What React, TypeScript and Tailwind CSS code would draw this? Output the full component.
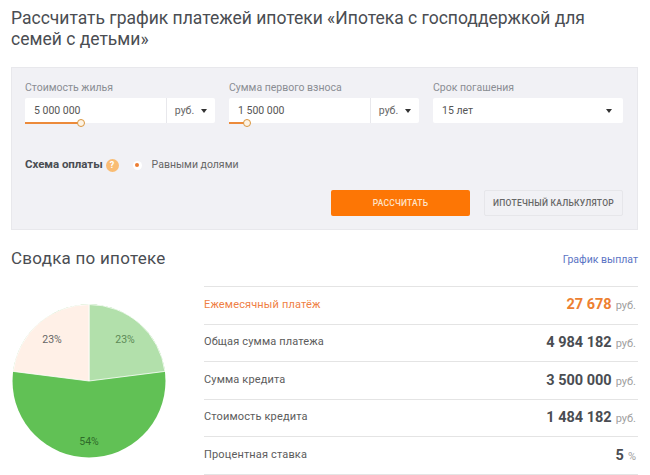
const font = { fontFamily: 'Roboto, "Noto Sans", sans-serif' };

function Caret() {
  return <span className="inline-block w-0 h-0 border-x-[3.5px] border-x-transparent border-t-[4px] border-t-[#333]" />;
}

function MoneyField({ label, value, knob }: { label: string; value: string; knob: number }) {
  return (
    <div className="w-[190px]">
      <div className="h-[18px] text-[10.5px] leading-[15px] text-[#8a8d93]">{label}</div>
      <div className="relative flex h-[25px] bg-white rounded-[2px]">
        <div className="w-[142px] pl-[9px] text-[10.5px] leading-[25px] text-[#555] border-r border-[#e8e8ec]">{value}</div>
        <div className="flex-1 flex items-center justify-center gap-[7px] text-[10.5px] text-[#666]">
          руб. <Caret />
        </div>
        {/* slider */}
        <div className="absolute left-0 bottom-[-1px] h-[2px] bg-[#ec8a3a]" style={{ width: knob }} />
        <div
          className="absolute bottom-[-4px] w-[8px] h-[8px] rounded-full bg-[#fdf3e4] border border-[#d9963f]"
          style={{ left: knob - 4 }}
        />
      </div>
    </div>
  );
}

function Row({ label, value, unit, accent }: { label: string; value: string; unit: string; accent?: boolean }) {
  return (
    <div className="flex items-center justify-between h-[37.6px] border-t border-[#e4e4e4] pr-[2px]">
      <span className={`text-[11px] tracking-[0.15px] -mt-[1px] ${accent ? 'text-[#ef7f45]' : 'text-[#5c5c5c]'}`}>{label}</span>
      <span className="flex items-baseline gap-[4px]">
        <span className={`text-[14.5px] font-bold ${accent ? 'text-[#ed8031]' : 'text-[#4a4d52]'}`}>{value}</span>
        <span className="text-[11px] text-[#a0a0a0]">{unit}</span>
      </span>
    </div>
  );
}

function Pie() {
  return (
    <svg width="154" height="154" viewBox="0 0 154 154" className="block">
      <circle cx="77" cy="77" r="76.5" fill="#61c155" />
      <path d="M77 77 L77 0.5 A76.5 76.5 0 0 1 152.9 67.4 Z" fill="#b2e0ab" stroke="#ffffff" strokeWidth="0.8" />
      <path d="M77 77 L1.1 67.4 A76.5 76.5 0 0 1 77 0.5 Z" fill="#fff0e7" stroke="#ffffff" strokeWidth="0.8" />
      <text x="40" y="39" textAnchor="middle" fontSize="10.5" fill="#666">23%</text>
      <text x="113" y="39" textAnchor="middle" fontSize="10.5" fill="#5c8a56">23%</text>
      <text x="77" y="141" textAnchor="middle" fontSize="10.5" fill="#2f6b2a">54%</text>
    </svg>
  );
}

export default function App() {
  return (
    <div className="w-[650px] h-[475px] overflow-hidden bg-white pl-[11px] pr-[12px] pt-[8px]" style={font}>
      <h1 className="h-[59px] text-[17.5px] leading-[21px] text-[#4a4d52] font-normal">
        Рассчитать график платежей ипотеки «Ипотека с господдержкой для семей с детьми»
      </h1>

      {/* Form panel */}
      <div className="h-[163px] bg-[#f1f1f5] border border-[#e8e8ec] pl-[13px] pr-[14px] pt-[12px]">
        <div className="flex justify-between">
          <MoneyField label="Стоимость жилья" value="5 000 000" knob={56} />
          <MoneyField label="Сумма первого взноса" value="1 500 000" knob={18} />
          <div className="w-[190px]">
            <div className="h-[18px] text-[10.5px] leading-[15px] text-[#8a8d93]">Срок погашения</div>
            <div className="flex items-center justify-between h-[25px] bg-white rounded-[2px] pl-[9px] pr-[11px] text-[10.5px] text-[#555]">
              15 лет <Caret />
            </div>
          </div>
        </div>

        <div className="flex items-center mt-[34px] h-[16px]">
          <span className="text-[11.5px] font-bold text-[#4a4d52] tracking-[-0.05px]">Схема оплаты</span>
          <span className="ml-[3px] w-[13px] h-[13px] rounded-full bg-[#f9bc73] text-white text-[9px] font-bold leading-[13px] text-center">?</span>
          <span className="relative ml-[14px] w-[9px] h-[9px] rounded-full bg-white flex items-center justify-center">
            <span className="w-[4px] h-[4px] rounded-full bg-[#ec7d32]" />
          </span>
          <span className="ml-[10px] text-[10.5px] text-[#666]">Равными долями</span>
        </div>

        <div className="flex justify-end gap-[14px] mt-[17px]">
          <button className="w-[139px] h-[26px] rounded-[2px] bg-[#fd7605] text-[#fde3c8] text-[8.5px] font-medium tracking-[0.2px]">РАССЧИТАТЬ</button>
          <button className="w-[139px] h-[26px] rounded-[2px] bg-[#f1f1f5] border border-[#e6e6ea] text-[#666] text-[8.5px] font-medium tracking-[0.25px]">ИПОТЕЧНЫЙ КАЛЬКУЛЯТОР</button>
        </div>
      </div>

      {/* Summary */}
      <div className="flex items-center justify-between h-[56px]">
        <h2 className="text-[17px] text-[#4a4d52] tracking-[0.25px] font-normal mt-[1px]">Сводка по ипотеке</h2>
        <a className="mt-[3px] text-[10.5px] text-[#5b74c4]">График выплат</a>
      </div>
      <div className="flex">
        <div className="w-[193px] pt-[18px] pl-[1px]">
          <Pie />
        </div>
        <div className="flex-1 border-b border-[#e4e4e4]">
          <Row label="Ежемесячный платёж" value="27 678" unit="руб." accent />
          <Row label="Общая сумма платежа" value="4 984 182" unit="руб." />
          <Row label="Сумма кредита" value="3 500 000" unit="руб." />
          <Row label="Стоимость кредита" value="1 484 182" unit="руб." />
          <Row label="Процентная ставка" value="5" unit="%" />
        </div>
      </div>
    </div>
  );
}
